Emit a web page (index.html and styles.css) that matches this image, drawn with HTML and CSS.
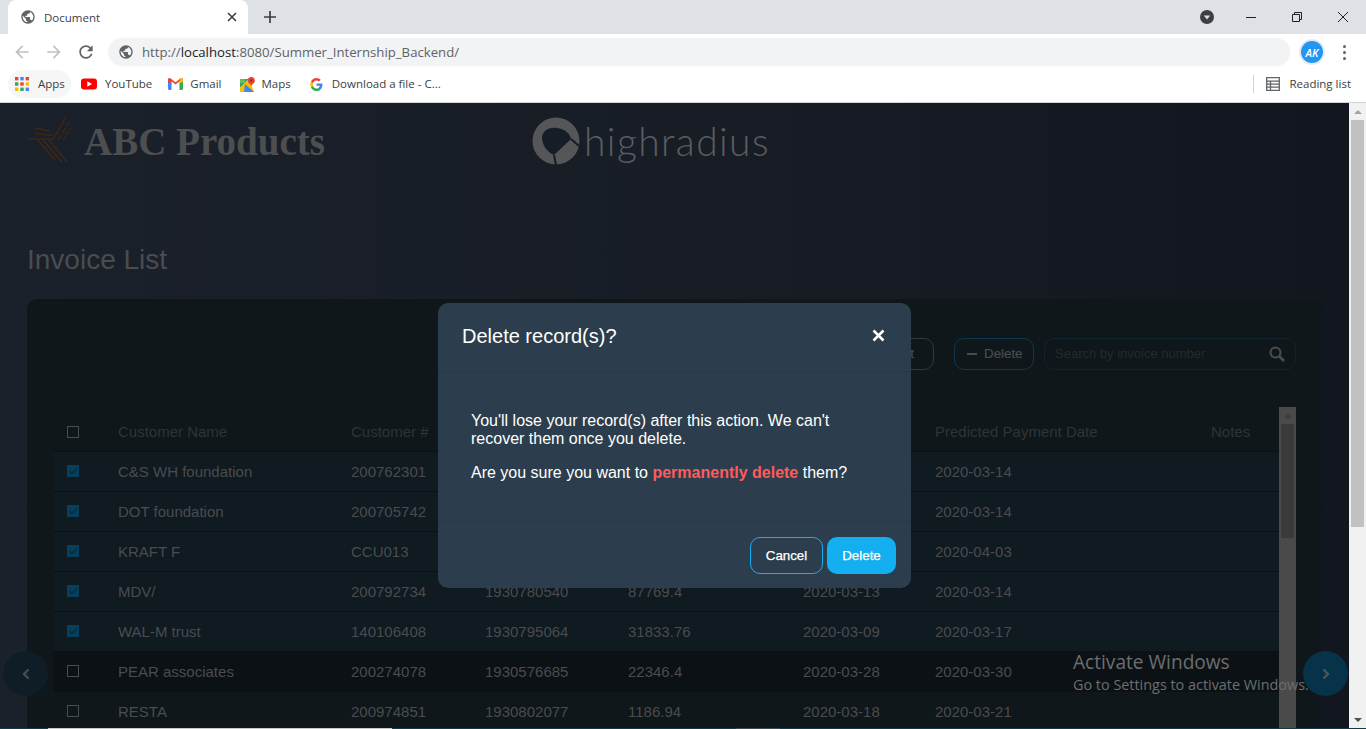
FILE: index.html
```html
<!DOCTYPE html>
<html lang="en">
<head>
    <meta charset="UTF-8">
    <meta name="viewport" content="width=device-width, initial-scale=1.0">
    <title>Document</title>
    <link rel="stylesheet" href="styles.css">
</head>
<body>
    <svg class="icon-defs" aria-hidden="true">
        <symbol id="globe" viewBox="0 0 24 24"><path d="M12 2C6.48 2 2 6.48 2 12s4.48 10 10 10 10-4.48 10-10S17.52 2 12 2zm-1 17.93c-3.95-.49-7-3.85-7-7.93 0-.62.08-1.21.21-1.79L9 15v1c0 1.1.9 2 2 2v1.93zm6.9-2.54c-.26-.81-1-1.39-1.9-1.39h-1v-3c0-.55-.45-1-1-1H8v-2h2c.55 0 1-.45 1-1V7h2c1.1 0 2-.9 2-2v-.41c2.93 1.19 5 4.06 5 7.41 0 2.08-.8 3.97-2.1 5.39z"/></symbol>
        <symbol id="tick" viewBox="0 0 12 12"><path d="M2.5 6.2 5 8.6 9.6 3.6" fill="none" stroke="#0f2a38" stroke-width="1.5"/></symbol>
    </svg>

    <header class="browser">
        <div class="tabstrip">
            <div class="tab">
                <svg class="tab-globe" width="16" height="16"><use href="#globe"/></svg>
                <span class="tab-title">Document</span>
                <svg class="tab-close" width="10" height="10" viewBox="0 0 10 10"><path d="M1 1l8 8M9 1l-8 8" stroke="#3c4043" stroke-width="1.6"/></svg>
            </div>
            <svg class="new-tab" width="12" height="12" viewBox="0 0 12 12"><path d="M6 0v12M0 6h12" stroke="#3c4043" stroke-width="1.7"/></svg>
            <div class="window-controls">
                <svg class="tab-search" width="14" height="14" viewBox="0 0 14 14"><circle cx="7" cy="7" r="7" fill="#3c4043"/><path d="M3.8 5.4h6.4L7 9.4z" fill="#dee1e6"/></svg>
                <svg class="win-btn" width="12" height="12" viewBox="0 0 12 12"><path d="M1 6.5h10" stroke="#202124"/></svg>
                <svg class="win-btn" width="12" height="12" viewBox="0 0 12 12"><path d="M1.5 3.5h7v7h-7zM3.5 3.5v-2h7v7h-2" fill="none" stroke="#202124"/></svg>
                <svg class="win-btn" width="12" height="12" viewBox="0 0 12 12"><path d="M1 1l10 10M11 1L1 11" stroke="#202124"/></svg>
            </div>
        </div>
        <div class="toolbar">
            <svg class="nav-icon" width="20" height="20" viewBox="0 0 24 24" fill="#bdc1c6"><path d="M20 11H7.83l5.59-5.59L12 4l-8 8 8 8 1.41-1.41L7.83 13H20v-2z"/></svg>
            <svg class="nav-icon" width="20" height="20" viewBox="0 0 24 24" fill="#bdc1c6"><path d="M4 11h12.17l-5.59-5.59L12 4l8 8-8 8-1.41-1.41L16.17 13H4v-2z"/></svg>
            <svg class="nav-icon" width="20" height="20" viewBox="0 0 24 24" fill="#5f6368"><path d="M17.65 6.35C16.2 4.9 14.21 4 12 4c-4.42 0-7.99 3.58-7.99 8s3.57 8 7.99 8c3.73 0 6.84-2.55 7.73-6h-2.08c-.82 2.33-3.04 4-5.65 4-3.31 0-6-2.69-6-6s2.69-6 6-6c1.66 0 3.14.69 4.22 1.78L13 11h7V4l-2.35 2.35z"/></svg>
            <div class="omnibox">
                <svg class="omni-globe" width="16" height="16"><use href="#globe"/></svg>
                <span class="url">http://<b>localhost</b>:8080/Summer_Internship_Backend/</span>
            </div>
            <div class="avatar"><span>AK</span></div>
            <div class="kebab"><i></i><i></i><i></i></div>
        </div>
        <div class="bookmarks">
            <div class="bookmark bookmark-apps">
                <svg width="14" height="14" viewBox="0 0 14 14">
                    <rect x="0" y="0" width="3.4" height="3.4" fill="#ea4335"/><rect x="5.3" y="0" width="3.4" height="3.4" fill="#4285f4"/><rect x="10.6" y="0" width="3.4" height="3.4" fill="#ea4335"/>
                    <rect x="0" y="5.3" width="3.4" height="3.4" fill="#34a853"/><rect x="5.3" y="5.3" width="3.4" height="3.4" fill="#ea4335"/><rect x="10.6" y="5.3" width="3.4" height="3.4" fill="#fbbc05"/>
                    <rect x="0" y="10.6" width="3.4" height="3.4" fill="#fbbc05"/><rect x="5.3" y="10.6" width="3.4" height="3.4" fill="#34a853"/><rect x="10.6" y="10.6" width="3.4" height="3.4" fill="#4285f4"/>
                </svg>
                <span>Apps</span>
            </div>
            <div class="bookmark bookmark-youtube">
                <svg width="16" height="12" viewBox="0 0 16 12"><rect width="16" height="11" y=".5" rx="3" fill="#f00"/><path d="M6.3 3.3v5.4L11 6z" fill="#fff"/></svg>
                <span>YouTube</span>
            </div>
            <div class="bookmark bookmark-gmail">
                <svg width="15" height="12" viewBox="0 0 15 12"><path d="M0 2v8.8c0 .6.5 1.2 1.1 1.2H3.5V5.4z" fill="#4285f4"/><path d="M15 2v8.8c0 .6-.5 1.2-1.1 1.2h-2.4V5.4z" fill="#34a853"/><path d="M0 1.5C0 .3 1.4-.4 2.3.3L7.5 4.3l5.2-4c.9-.7 2.3 0 2.3 1.2V3.400L11.500 6V3.300L7.500 6.400 3.500 3.300V6L0 3.400z" fill="#ea4335"/><path d="M11.500 3.300V6L15 3.400V1.500C15 .3 13.600-.4 12.700.3z" fill="#fbbc05"/></svg>
                <span>Gmail</span>
            </div>
            <div class="bookmark bookmark-maps">
                <svg width="15" height="15" viewBox="0 0 15 15"><path d="M0 2h9l-9 9z" fill="#34a853"/><path d="M0 11 9 2l5 13H0z" fill="#fbbc05"/><path d="M5 7l9 8H4z" fill="#4285f4"/><path d="M0 2h5v4H0z" fill="#66bb6a"/><circle cx="11.300" cy="3.500" r="3.500" fill="#ea4335"/><path d="M9 5.500 11.300 9l2.300-3.500z" fill="#ea4335"/><circle cx="11.300" cy="3.500" r="1.200" fill="#9c2b20"/></svg>
                <span>Maps</span>
            </div>
            <div class="bookmark bookmark-download">
                <svg width="13" height="13" viewBox="0 0 24 24"><path d="M23 12.300c0-.8-.1-1.600-.2-2.300H12v4.500h6.200c-.3 1.400-1.100 2.600-2.300 3.400v2.800h3.700c2.200-2 3.400-5 3.400-8.400z" fill="#4285f4"/><path d="M12 24c3.100 0 5.700-1 7.600-2.800l-3.700-2.800c-1 .7-2.300 1.100-3.900 1.100-3 0-5.500-2-6.400-4.700H1.800v2.900C3.700 21.400 7.600 24 12 24z" fill="#34a853"/><path d="M5.600 14.800c-.5-1.400-.5-3 0-4.400V7.500H1.800c-1.600 3.200-1.600 7 0 10.200z" fill="#fbbc05"/><path d="M12 4.800c1.700 0 3.200.6 4.400 1.700l3.300-3.300C17.700 1.300 15.100 0 12 0 7.600 0 3.700 2.600 1.800 6.500l3.800 2.900C6.500 6.800 9 4.800 12 4.800z" fill="#ea4335"/></svg>
                <span>Download a file - C...</span>
            </div>
            <div class="reading-list">
                <svg width="14" height="14" viewBox="0 0 14 14"><path d="M.7.700h12.600v12.600H.7zM.7 4.200h12.600M.7 7.200h12.600M.7 10.200h12.600M4.500 4.200v9.100" fill="none" stroke="#5f6368" stroke-width="1.300"/></svg>
                <span>Reading list</span>
            </div>
        </div>
    </header>

    <div class="viewport">
        <main class="page">
            <div class="brand-row">
                <div class="brand-abc">
                    <svg width="50" height="52" viewBox="0 0 50 52" fill="none" stroke="#452810" stroke-width="1.200">
                        <path d="M3 25h26"/><path d="M11 20c5-2 8 2 18 1"/><path d="M11 15c5-2 9 2 15 2"/>
                        <path d="M29 26 42 3"/><path d="M34 26 45 8" stroke-dasharray="6 2"/><path d="M39 26l8-12" stroke-dasharray="4 2"/>
                        <path d="M14 26l17 20"/><path d="M19 26l19 22"/><path d="M25 26l18 22"/>
                    </svg>
                    <span class="brand-abc-name">ABC Products</span>
                </div>
                <div class="brand-hr">
                    <svg width="48" height="48" viewBox="0 0 48 48">
                        <circle cx="24" cy="24" r="23.500" fill="#545658"/>
                        <path d="M10 20C11 13 18 10 25 11 32 12 38 16 39 22L22 38C15 35 10 28 10 20z" fill="#161d26"/>
                        <path d="M22 38 24 48M39 22 47 29" stroke="#161d26" stroke-width="2" fill="none"/>
                    </svg>
                    <span class="brand-hr-name">highradius</span>
                </div>
            </div>

            <h1 class="page-title">Invoice List</h1>

            <section class="panel">
                <div class="actions">
                    <button type="button" class="btn btn-plain">Edit</button>
                    <button type="button" class="btn btn-delete"><i class="minus"></i>Delete</button>
                    <div class="search">
                        <span>Search by invoice number</span>
                        <svg width="16" height="16" viewBox="0 0 16 16" fill="none" stroke="#4a4c4e"><circle cx="6.500" cy="6.500" r="5" stroke-width="2.200"/><path d="M10.200 10.200 15 15" stroke-width="2.800"/></svg>
                    </div>
                </div>

                <div class="table-wrap">
                    <table class="invoices">
                        <thead>
                            <tr>
                                <th class="col-check"><span class="check"></span></th>
                                <th class="col-name">Customer Name</th>
                                <th class="col-number">Customer #</th>
                                <th class="col-invoice"></th>
                                <th class="col-amount"></th>
                                <th class="col-due"></th>
                                <th class="col-predicted">Predicted Payment Date</th>
                                <th>Notes</th>
                            </tr>
                        </thead>
                        <tbody>
                            <tr class="selected"><td><span class="check checked"><svg width="12" height="12"><use href="#tick"/></svg></span></td><td>C&amp;S WH foundation</td><td>200762301</td><td></td><td></td><td></td><td>2020-03-14</td><td></td></tr>
                            <tr class="selected"><td><span class="check checked"><svg width="12" height="12"><use href="#tick"/></svg></span></td><td>DOT foundation</td><td>200705742</td><td></td><td></td><td></td><td>2020-03-14</td><td></td></tr>
                            <tr class="selected"><td><span class="check checked"><svg width="12" height="12"><use href="#tick"/></svg></span></td><td>KRAFT F</td><td>CCU013</td><td></td><td></td><td></td><td>2020-04-03</td><td></td></tr>
                            <tr class="selected"><td><span class="check checked"><svg width="12" height="12"><use href="#tick"/></svg></span></td><td>MDV/</td><td>200792734</td><td>1930780540</td><td>87769.4</td><td>2020-03-13</td><td>2020-03-14</td><td></td></tr>
                            <tr class="selected"><td><span class="check checked"><svg width="12" height="12"><use href="#tick"/></svg></span></td><td>WAL-M trust</td><td>140106408</td><td>1930795064</td><td>31833.76</td><td>2020-03-09</td><td>2020-03-17</td><td></td></tr>
                            <tr class="odd"><td><span class="check"></span></td><td>PEAR associates</td><td>200274078</td><td>1930576685</td><td>22346.4</td><td>2020-03-28</td><td>2020-03-30</td><td></td></tr>
                            <tr><td><span class="check"></span></td><td>RESTA</td><td>200974851</td><td>1930802077</td><td>1186.94</td><td>2020-03-18</td><td>2020-03-21</td><td></td></tr>
                        </tbody>
                    </table>
                    <div class="table-scroll">
                        <span class="arrow-up"></span>
                        <div class="table-thumb"></div>
                    </div>
                </div>
            </section>

            <button type="button" class="pager pager-prev"><svg width="10" height="12" viewBox="0 0 10 12"><path d="M7.500 1.500 3 6l4.500 4.500" fill="none" stroke="#4a4c4e" stroke-width="2.400"/></svg></button>
            <button type="button" class="pager pager-next"><svg width="10" height="12" viewBox="0 0 10 12"><path d="M2.500 1.500 7 6l-4.500 4.500" fill="none" stroke="#4f5558" stroke-width="2.400"/></svg></button>

            <div class="activate">
                <div class="activate-title">Activate Windows</div>
                <div class="activate-sub">Go to Settings to activate Windows.</div>
            </div>

            <div class="modal">
                <div class="modal-head">
                    <h2>Delete record(s)?</h2>
                    <svg width="13" height="13" viewBox="0 0 13 13"><path d="M1.500 1.500l10 10M11.500 1.500l-10 10" stroke="#fff" stroke-width="2.600"/></svg>
                </div>
                <div class="modal-body">
                    <p>You'll lose your record(s) after this action. We can't recover them once you delete.</p>
                    <p>Are you sure you want to <strong>permanently delete</strong> them?</p>
                </div>
                <div class="modal-foot">
                    <button type="button" class="modal-btn modal-cancel">Cancel</button>
                    <button type="button" class="modal-btn modal-confirm">Delete</button>
                </div>
            </div>
        </main>

        <div class="page-scroll">
            <span class="arrow-up"></span>
            <div class="page-thumb"></div>
            <span class="arrow-down"></span>
        </div>
    </div>
    <div class="bottom-edge"></div>
</body>
</html>
```

FILE: styles.css
```css
* {
    box-sizing: border-box;
}
html, body {
    height: 100%;
}
body {
    margin: 0;
    height: 729px;
    overflow: hidden;
    display: flex;
    flex-direction: column;
    font-family: "Liberation Sans", Arial, sans-serif;
    background-color: #12171f;
}
.icon-defs {
    display: none;
}

/* browser chrome */
.browser {
    height: 103px;
    flex: none;
    background-color: #fff;
    border-bottom: 1px solid #d2d4d7;
    font-family: "Open Sans", sans-serif;
}
.tabstrip {
    height: 34px;
    background-color: #dee1e6;
    display: flex;
    align-items: center;
    padding-left: 8px;
}
.tab {
    width: 240px;
    height: 34px;
    align-self: flex-end;
    background-color: #fff;
    border-radius: 8px 8px 0 0;
    display: flex;
    align-items: center;
    padding: 0 11px 0 12px;
}
.tab-globe, .omni-globe {
    fill: #5f6368;
}
.tab-title {
    margin-left: 8px;
    flex: 1;
    font-size: 11.500px;
    color: #3c4043;
}
.new-tab {
    margin-left: 16px;
}
.window-controls {
    margin-left: auto;
    display: flex;
    align-items: center;
    padding-right: 17px;
}
.tab-search {
    margin-right: 31px;
}
.win-btn {
    margin-left: 34px;
}
.tab-search + .win-btn {
    margin-left: 0;
}
.toolbar {
    height: 36px;
    display: flex;
    align-items: center;
    padding-left: 12px;
}
.nav-icon {
    margin-right: 12px;
}
.omnibox {
    width: 1182px;
    height: 28px;
    background-color: #f1f3f4;
    border-radius: 14px;
    display: flex;
    align-items: center;
    padding-left: 10px;
}
.url {
    margin-left: 8px;
    font-size: 13.200px;
    color: #5f6368;
}
.url b {
    font-weight: 400;
    color: #202124;
}
.avatar {
    width: 26px;
    height: 26px;
    margin-left: 9px;
    border-radius: 50%;
    border: 2px solid #e8eaed;
    background-color: #2196f3;
    color: #fff;
    font-size: 11px;
    font-weight: 600;
    font-style: italic;
    display: flex;
    align-items: center;
    justify-content: center;
}
.kebab {
    margin-left: 18px;
    display: flex;
    flex-direction: column;
    gap: 3px;
}
.kebab i {
    width: 3px;
    height: 3px;
    border-radius: 50%;
    background-color: #5f6368;
}
.bookmarks {
    height: 28px;
    display: flex;
    align-items: center;
    padding-left: 8px;
    font-size: 11.500px;
    color: #3c4043;
}
.bookmark {
    display: flex;
    align-items: center;
    height: 28px;
}
.bookmark span, .reading-list span {
    margin-bottom: 2px;
}
.bookmark-apps {
    width: 63px;
    padding-left: 7px;
    gap: 9px;
    background-color: #f6f6f7;
    border-radius: 14px;
}
.bookmark-youtube {
    margin-left: 10px;
    gap: 8px;
}
.bookmark-gmail {
    margin-left: 16px;
    gap: 7px;
}
.bookmark-maps {
    margin-left: 18px;
    gap: 7px;
}
.bookmark-download {
    margin-left: 19px;
    gap: 9px;
}
.reading-list {
    margin-left: auto;
    margin-right: 15px;
    height: 18px;
    padding-left: 12px;
    border-left: 1px solid #d2d4d7;
    display: flex;
    align-items: center;
    gap: 9px;
}

/* page under the dialog */
.viewport {
    flex: 1;
    min-height: 0;
    display: flex;
}
.page {
    flex: 1;
    min-width: 0;
    position: relative;
    overflow: hidden;
    padding-left: 27px;
    background: linear-gradient(to right, #1b212b, #171c25 55%, #12161f);
}
.brand-row {
    height: 90px;
    display: flex;
}
.brand-abc {
    width: 508px;
    margin-left: -3px;
    padding-top: 11px;
    display: flex;
    align-items: flex-start;
    gap: 10px;
}
.brand-abc-name {
    margin-top: 5px;
    font-family: "Liberation Serif", serif;
    font-size: 39px;
    font-weight: 700;
    color: #4d4e50;
}
.brand-hr {
    display: flex;
    align-items: flex-start;
    gap: 4px;
    padding-top: 14px;
}
.brand-hr-name {
    font-family: Lato, sans-serif;
    font-size: 39px;
    font-weight: 300;
    line-height: 48px;
    color: #5a5d60;
    letter-spacing: 1.400px;
}
.page-title {
    margin: 51px 0 23px;
    font-size: 28px;
    line-height: 32px;
    font-weight: 400;
    color: #4a4c4e;
}
.panel {
    width: 1295px;
    height: 440px;
    padding: 39px 26px 0 26px;
    background-color: #0f171a;
    border-radius: 10px 10px 0 0;
}
.actions {
    display: flex;
    justify-content: flex-end;
    margin-bottom: 37px;
}
.btn {
    height: 32px;
    padding-bottom: 2px;
    border-radius: 10px;
    background: none;
    font-family: inherit;
    font-size: 13.333px;
    color: #4a4c4e;
    -webkit-text-stroke: 0.2px;
    display: flex;
    align-items: center;
}
.btn-plain {
    width: 84px;
    margin-right: 20px;
    padding-left: 40px;
    border: 1px solid #33383b;
}
.btn-delete {
    width: 80px;
    margin-right: 10px;
    padding-left: 12px;
    border: 1px solid #0b3a50;
}
.minus {
    width: 10px;
    height: 2px;
    margin-right: 7px;
    background-color: #4a4c4e;
}
.search {
    width: 252px;
    height: 32px;
    padding: 0 10px 2px 10px;
    border: 1px solid #10252d;
    border-radius: 10px;
    display: flex;
    align-items: center;
    justify-content: space-between;
    font-size: 13px;
    color: #26292c;
}
.search svg {
    margin-top: 2px;
}
.table-wrap {
    display: flex;
    height: 322px;
    overflow: hidden;
}
.invoices {
    width: 1226px;
    height: 322px;
    flex: none;
    table-layout: fixed;
    border-collapse: collapse;
    font-size: 15px;
    color: #4a4c4e;
}
.invoices th {
    height: 44px;
    padding: 6px 0 0;
    text-align: left;
    font-weight: 400;
    color: #2f3437;
    border-bottom: 1px solid #0b1114;
}
.invoices td {
    height: 40px;
    padding: 0;
    border-bottom: 1px solid #0b1114;
}
.invoices td:first-child, .invoices th:first-child {
    padding-left: 14px;
}
.col-check { width: 65px; }
.col-name { width: 233px; }
.col-number { width: 134px; }
.col-invoice { width: 143px; }
.col-amount { width: 175px; }
.col-due { width: 132px; }
.col-predicted { width: 276px; }
.selected {
    background-color: #0f1a21;
}
.odd {
    background-color: #0c1115;
}
.odd td {
    border-bottom-color: #0c1115;
}
.check {
    display: block;
    width: 12px;
    height: 12px;
    border: 1px solid #4a4c4e;
}
.checked {
    border: none;
    background-color: #06405f;
}
.checked svg {
    display: block;
}
.table-scroll {
    width: 17px;
    flex: none;
    background-color: #4a4a4a;
    display: flex;
    flex-direction: column;
    align-items: center;
    padding-top: 7px;
}
.table-thumb {
    width: 13px;
    height: 114px;
    margin-top: 6px;
    background-color: #3a3a3a;
}
.arrow-up, .arrow-down {
    width: 0;
    height: 0;
    border-left: 4px solid transparent;
    border-right: 4px solid transparent;
}
.arrow-up {
    border-bottom: 4px solid #3a3a3a;
}
.page-scroll .arrow-up {
    border-bottom-color: #a3a3a3;
}
.arrow-down {
    margin-top: auto;
    margin-bottom: 6px;
    border-top: 4px solid #505050;
}
.page-scroll {
    width: 17px;
    flex: none;
    background-color: #f1f1f1;
    display: flex;
    flex-direction: column;
    align-items: center;
    padding-top: 7px;
}
.page-thumb {
    width: 13px;
    height: 407px;
    margin-top: 6px;
    background-color: #c1c1c1;
}
.bottom-edge {
    height: 1px;
    flex: none;
    background: linear-gradient(to right, #123a44 48px, #c8c8c8 48px, #c8c8c8 392px, #123a44 392px, #123a44 736px, #3a4a50 736px, #3a4a50 780px, #123a44 780px);
}

/* things lying over the page */
.pager {
    position: absolute;
    top: 548px;
    width: 45px;
    height: 45px;
    padding: 0;
    border: none;
    border-radius: 50%;
    display: flex;
    align-items: center;
    justify-content: center;
}
.pager-prev {
    left: 3px;
    background-color: #0f1e26;
}
.pager-next {
    left: 1303px;
    background-color: #06324a;
}
.activate {
    position: absolute;
    left: 1073px;
    top: 547px;
    font-family: "Open Sans", sans-serif;
    color: #6c6e70;
    white-space: nowrap;
}
.activate-title {
    font-size: 19.100px;
    line-height: 24px;
}
.activate-sub {
    font-size: 14.400px;
    line-height: 22px;
}
.modal {
    position: absolute;
    left: 438px;
    top: 200px;
    width: 473px;
    height: 285px;
    background-color: #2c3e4d;
    border-radius: 10px;
    color: #fff;
}
.modal-head {
    height: 69px;
    padding: 0 26px 2px 24px;
    border-bottom: 1px solid #293a47;
    display: flex;
    align-items: center;
    justify-content: space-between;
}
.modal-head h2 {
    margin: 0;
    font-size: 20px;
    font-weight: 400;
}
.modal-head svg {
    margin-top: -1px;
}
.modal-body {
    height: 150px;
    padding: 40px 33px 0;
    border-bottom: 1px solid #293a47;
    font-size: 16px;
    line-height: 18px;
}
.modal-body p {
    margin: 0 0 16px;
}
.modal-body strong {
    color: #ff5b5b;
}
.modal-foot {
    display: flex;
    justify-content: flex-end;
    gap: 4px;
    padding: 15px 15px 0 0;
}
.modal-btn {
    height: 37px;
    border-radius: 10px;
    font-family: inherit;
    font-size: 13.333px;
    color: #fff;
    -webkit-text-stroke: 0.25px;
}
.modal-cancel {
    width: 73px;
    background: none;
    border: 1px solid #14aff1;
}
.modal-confirm {
    width: 69px;
    background-color: #14aff1;
    border: none;
}
```
